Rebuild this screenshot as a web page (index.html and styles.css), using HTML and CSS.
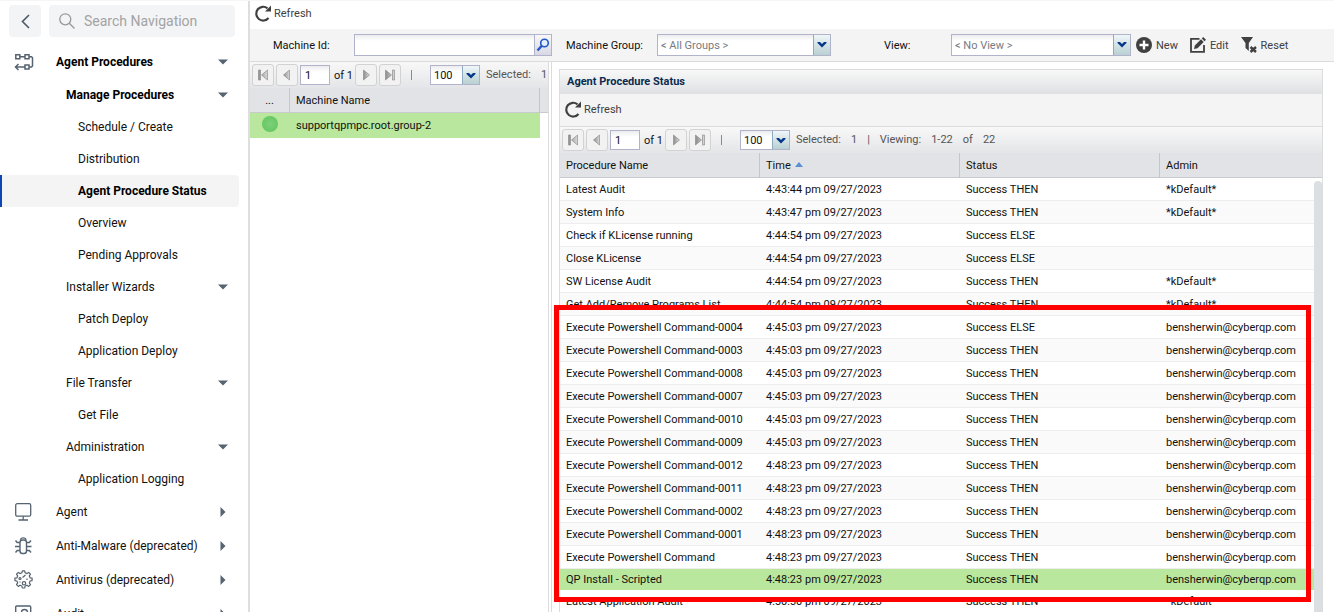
FILE: index.html
```html
<!DOCTYPE html>
<html lang="en">
<head>
  <meta charset="UTF-8">
  <meta name="viewport" content="width=device-width, initial-scale=1.0">
  <title>Agent Procedure Status</title>
  <link rel="stylesheet" href="styles.css">
</head>
<body>
  <!-- Shared icons -->
  <svg class="defs" aria-hidden="true">
    <defs>
      <linearGradient id="grey" x1="0" x2="1"><stop offset="0" stop-color="#8c8c8c"/><stop offset="1" stop-color="#dadada"/></linearGradient>
    </defs>
    <symbol id="i-refresh" viewBox="0 0 18 18"><path d="M14.500 14A6.900 6.900 0 1 1 13.500 4.300" fill="none" stroke="#404040" stroke-width="2.200"/><path d="M17 1.500v6h-6z" fill="#404040"/></symbol>
    <symbol id="i-first" viewBox="0 0 12 12"><path d="M1.500 1h2v10h-2zM10.500 1v10L4.500 6z" fill="url(#grey)" stroke="#8e8e8e" stroke-width=".7"/></symbol>
    <symbol id="i-prev" viewBox="0 0 12 12"><path d="M8.500 1v10L2.500 6z" fill="url(#grey)" stroke="#8e8e8e" stroke-width=".7"/></symbol>
    <symbol id="i-next" viewBox="0 0 12 12"><path d="M3.500 1v10l6-5z" fill="url(#grey)" stroke="#8e8e8e" stroke-width=".7"/></symbol>
    <symbol id="i-last" viewBox="0 0 12 12"><path d="M1.500 1v10l6-5zM8.500 1h2v10h-2z" fill="url(#grey)" stroke="#8e8e8e" stroke-width=".7"/></symbol>
    <symbol id="i-chevron" viewBox="0 0 10 6"><path d="M.5 0h2.500l2 2 2-2h2.500v1L5 5.500.5 1z" fill="#06388a"/></symbol>
    <symbol id="i-down" viewBox="0 0 10 6"><path d="M0 .5h10L5 5.500z" fill="#566370"/></symbol>
    <symbol id="i-right" viewBox="0 0 6 10"><path d="M.5 0v10l5-5z" fill="#566370"/></symbol>
  </svg>

  <div class="app">
    <nav class="sidebar">
      <div class="sidebar-top">
        <button class="back" aria-label="Back"><svg width="9" height="15" viewBox="0 0 9 15"><path d="M8 1 1.500 7.500 8 14" fill="none" stroke="#4b5a69" stroke-width="1.600"/></svg></button>
        <label class="search">
          <svg width="16" height="16" viewBox="0 0 16 16"><g fill="none" stroke="#999" stroke-width="1.300"><circle cx="6.300" cy="6.300" r="5.500"/><path d="m10.300 10.300 5.200 5.200"/></g></svg>
          <input type="text" placeholder="Search Navigation" aria-label="Search Navigation">
        </label>
      </div>
      <a class="item top bold" href="#">
        <svg class="icon" width="20" height="20" viewBox="0 0 20 20"><g fill="none" stroke="#566370" stroke-width="1.500"><path d="M1.800 2.800h4v4h-4zM11 2.800h4v4h-4zM11 13h4v4h-4zM6 4.800h5M15 4.800h2.500l1 1V14l-1 1H15M11 15H2M4.500 12 1.500 15l3 3"/></g></svg>
        Agent Procedures<svg class="arrow" width="10" height="6"><use href="#i-down"/></svg></a>
      <a class="item mid bold" href="#">Manage Procedures<svg class="arrow" width="10" height="6"><use href="#i-down"/></svg></a>
      <a class="item leaf" href="#">Schedule / Create</a>
      <a class="item leaf" href="#">Distribution</a>
      <a class="item leaf bold active" href="#">Agent Procedure Status</a>
      <a class="item leaf" href="#">Overview</a>
      <a class="item leaf" href="#">Pending Approvals</a>
      <a class="item mid" href="#">Installer Wizards<svg class="arrow" width="10" height="6"><use href="#i-down"/></svg></a>
      <a class="item leaf" href="#">Patch Deploy</a>
      <a class="item leaf" href="#">Application Deploy</a>
      <a class="item mid" href="#">File Transfer<svg class="arrow" width="10" height="6"><use href="#i-down"/></svg></a>
      <a class="item leaf" href="#">Get File</a>
      <a class="item mid" href="#">Administration<svg class="arrow" width="10" height="6"><use href="#i-down"/></svg></a>
      <a class="item leaf" href="#">Application Logging</a>
      <a class="item top" href="#">
        <svg class="icon" width="20" height="20" viewBox="0 0 20 20"><g fill="none" stroke="#566370" stroke-width="1.300"><rect x="1.700" y="1.700" width="15" height="12.500" rx="1.500"/><path d="M9.200 14.200v3.500M4.500 18h9.500"/></g></svg>
        Agent<svg class="arrow" width="6" height="10"><use href="#i-right"/></svg></a>
      <a class="item top" href="#">
        <svg class="icon" width="20" height="20" viewBox="0 0 20 20"><g fill="none" stroke="#566370" stroke-width="1.400"><rect x="6" y="4" width="6.500" height="13.500" rx="2.500"/><path d="M6.500 3.800c.5-2.600 5-2.600 5.500 0M1.500 4.500 3.200 6.500h2.800M1 10.500h5M1.500 16.500l1.700-2h2.800M17 4.500l-1.700 2h-2.800M17.500 10.500h-5M17 16.500l-1.700-2h-2.800"/></g></svg>
        Anti-Malware (deprecated)<svg class="arrow" width="6" height="10"><use href="#i-right"/></svg></a>
      <a class="item top" href="#">
        <svg class="icon" width="20" height="20" viewBox="0 0 20 20"><g fill="none" stroke="#566370" stroke-width="1.200" stroke-linejoin="round"><path d="M8.300.8h2.400l.4 2 1.900.8 1.700-1.200 1.800 1.800-1.200 1.700.8 1.900 2 .4v2.400l-2 .4-.8 1.900 1.200 1.700-1.800 1.800-1.700-1.200-1.900.8-.4 2H8.300l-.4-2-1.900-.8-1.700 1.200-1.800-1.800 1.200-1.700-.8-1.900-2-.4V8.200l2-.4.8-1.900-1.200-1.700 1.800-1.800L6 3.600l1.900-.8z"/><circle cx="10" cy="13.300" r="1.700"/><circle cx="6" cy="8.500" r="1"/><path d="m8.500 7.500 3-2.500M13 8.500v1.500M6 11.500v1"/></g></svg>
        Antivirus (deprecated)<svg class="arrow" width="6" height="10"><use href="#i-right"/></svg></a>
      <a class="item top" href="#">
        <svg class="icon" width="20" height="20" viewBox="0 0 20 20"><g fill="none" stroke="#566370" stroke-width="1.400"><rect x="1.700" y="2" width="15" height="15" rx="1"/><circle cx="10.500" cy="8.500" r="3"/></g></svg>
        Audit<svg class="arrow" width="6" height="10"><use href="#i-right"/></svg></a>
    </nav>

    <main class="main">
      <div class="bar">
        <button class="tool"><svg width="18" height="18"><use href="#i-refresh"/></svg>Refresh</button>
      </div>

      <form class="filters">
        <label class="f-id" for="machineId">Machine Id:</label>
        <div class="lookup">
          <input type="text" id="machineId">
          <button type="button" aria-label="Find machine"><svg width="14" height="14" viewBox="0 0 14 14"><circle cx="8.500" cy="5" r="3.800" fill="#e4f0ff" stroke="#2257c4" stroke-width="1.600"/><path d="M5.800 7.800 1.500 12.500" stroke="#2257c4" stroke-width="2.400"/></svg></button>
        </div>
        <label class="f-group" for="group">Machine Group:</label>
        <div class="combo wide"><select id="group"><option>&lt; All Groups &gt;</option></select><svg width="10" height="6"><use href="#i-chevron"/></svg></div>
        <label class="f-view" for="view">View:</label>
        <div class="combo wider"><select id="view"><option>&lt; No View &gt;</option></select><svg width="10" height="6"><use href="#i-chevron"/></svg></div>
        <button type="button" class="tool f-new"><svg width="16" height="16" viewBox="0 0 16 16"><circle cx="8" cy="8" r="8" fill="#404040"/><path d="M8 3.500v9M3.500 8h9" stroke="#fff" stroke-width="2.400"/></svg>New</button>
        <button type="button" class="tool f-edit"><svg width="16" height="16" viewBox="0 0 16 16"><path d="M9.500 1.800H1v13h13V8" fill="none" stroke="#404040" stroke-width="1.800"/><path d="m4 12 .8-3.500L11 2.300l2.700 2.700-6.200 6.200zM11.800 1.500 13.200 0 16 2.800l-1.500 1.400z" fill="#404040"/></svg>Edit</button>
        <button type="button" class="tool f-reset"><svg width="16" height="16" viewBox="0 0 16 16"><path d="M0 0h12L7.800 6v8L4.500 11V6z" fill="#404040"/><path d="m9.500 10 5.500 5M15 10l-5.500 5" stroke="#404040" stroke-width="2.400"/></svg>Reset</button>
      </form>

      <div class="panes">
        <section class="machines">
          <div class="pager">
            <button aria-label="First page"><svg width="12" height="12"><use href="#i-first"/></svg></button>
            <button aria-label="Previous page"><svg width="12" height="12"><use href="#i-prev"/></svg></button>
            <input type="text" value="1" aria-label="Page">
            <span class="of">of 1</span>
            <button aria-label="Next page"><svg width="12" height="12"><use href="#i-next"/></svg></button>
            <button aria-label="Last page"><svg width="12" height="12"><use href="#i-last"/></svg></button>
            <span class="sep"></span>
            <div class="combo size"><select aria-label="Page size"><option>100</option></select><svg width="10" height="6"><use href="#i-chevron"/></svg></div>
            <span class="count"><span>Selected:</span><span>1</span></span>
          </div>
          <table class="grid">
            <thead><tr><th class="c-state">...</th><th>Machine Name</th><th class="c-end"></th></tr></thead>
            <tbody><tr class="selected"><td class="c-state"><span class="online"></span></td><td>supportqpmpc.root.group-2</td><td class="blank"></td></tr></tbody>
          </table>
        </section>

        <section class="status">
          <div class="panel">
            <h1>Agent Procedure Status</h1>
            <div class="bar inner">
              <button class="tool"><svg width="18" height="18"><use href="#i-refresh"/></svg>Refresh</button>
            </div>
            <div class="pager">
              <button aria-label="First page"><svg width="12" height="12"><use href="#i-first"/></svg></button>
              <button aria-label="Previous page"><svg width="12" height="12"><use href="#i-prev"/></svg></button>
              <input type="text" value="1" aria-label="Page">
              <span class="of">of 1</span>
              <button aria-label="Next page"><svg width="12" height="12"><use href="#i-next"/></svg></button>
              <button aria-label="Last page"><svg width="12" height="12"><use href="#i-last"/></svg></button>
              <span class="sep"></span>
              <div class="combo size"><select aria-label="Page size"><option>100</option></select><svg width="10" height="6"><use href="#i-chevron"/></svg></div>
              <span class="count"><span>Selected:</span><span>1</span><span>|</span><span>Viewing:</span><span>1-22</span><span>of</span><span>22</span></span>
            </div>
            <div class="log">
              <table class="grid">
                <thead><tr><th class="c-200">Procedure Name</th><th class="c-200">Time <svg width="8" height="5" viewBox="0 0 8 5"><path d="M0 5h8L4 0z" fill="#5a8fd8"/></svg></th><th class="c-200">Status</th><th>Admin</th></tr></thead>
                <tbody>
                  <tr><td>Latest Audit</td><td>4:43:44 pm 09/27/2023</td><td>Success THEN</td><td>*kDefault*</td></tr>
                  <tr><td>System Info</td><td>4:43:47 pm 09/27/2023</td><td>Success THEN</td><td>*kDefault*</td></tr>
                  <tr><td>Check if KLicense running</td><td>4:44:54 pm 09/27/2023</td><td>Success ELSE</td><td></td></tr>
                  <tr><td>Close KLicense</td><td>4:44:54 pm 09/27/2023</td><td>Success ELSE</td><td></td></tr>
                  <tr><td>SW License Audit</td><td>4:44:54 pm 09/27/2023</td><td>Success THEN</td><td>*kDefault*</td></tr>
                  <tr><td>Get Add/Remove Programs List</td><td>4:44:54 pm 09/27/2023</td><td>Success THEN</td><td>*kDefault*</td></tr>
                  <tr><td>Execute Powershell Command-0004</td><td>4:45:03 pm 09/27/2023</td><td>Success ELSE</td><td>bensherwin@cyberqp.com</td></tr>
                  <tr><td>Execute Powershell Command-0003</td><td>4:45:03 pm 09/27/2023</td><td>Success THEN</td><td>bensherwin@cyberqp.com</td></tr>
                  <tr><td>Execute Powershell Command-0008</td><td>4:45:03 pm 09/27/2023</td><td>Success THEN</td><td>bensherwin@cyberqp.com</td></tr>
                  <tr><td>Execute Powershell Command-0007</td><td>4:45:03 pm 09/27/2023</td><td>Success THEN</td><td>bensherwin@cyberqp.com</td></tr>
                  <tr><td>Execute Powershell Command-0010</td><td>4:45:03 pm 09/27/2023</td><td>Success THEN</td><td>bensherwin@cyberqp.com</td></tr>
                  <tr><td>Execute Powershell Command-0009</td><td>4:45:03 pm 09/27/2023</td><td>Success THEN</td><td>bensherwin@cyberqp.com</td></tr>
                  <tr><td>Execute Powershell Command-0012</td><td>4:48:23 pm 09/27/2023</td><td>Success THEN</td><td>bensherwin@cyberqp.com</td></tr>
                  <tr><td>Execute Powershell Command-0011</td><td>4:48:23 pm 09/27/2023</td><td>Success THEN</td><td>bensherwin@cyberqp.com</td></tr>
                  <tr><td>Execute Powershell Command-0002</td><td>4:48:23 pm 09/27/2023</td><td>Success THEN</td><td>bensherwin@cyberqp.com</td></tr>
                  <tr><td>Execute Powershell Command-0001</td><td>4:48:23 pm 09/27/2023</td><td>Success THEN</td><td>bensherwin@cyberqp.com</td></tr>
                  <tr><td>Execute Powershell Command</td><td>4:48:23 pm 09/27/2023</td><td>Success THEN</td><td>bensherwin@cyberqp.com</td></tr>
                  <tr class="selected"><td>QP Install - Scripted</td><td>4:48:23 pm 09/27/2023</td><td>Success THEN</td><td>bensherwin@cyberqp.com</td></tr>
                  <tr><td>Latest Application Audit</td><td>4:50:50 pm 09/27/2023</td><td>Success THEN</td><td>*kDefault*</td></tr>
                </tbody>
              </table>
              <div class="scrollbar"></div>
              <div class="marker"></div>
            </div>
          </div>
        </section>
      </div>
    </main>
  </div>
</body>
</html>
```
FILE: styles.css
```css
* {
  box-sizing: border-box;
}

body {
  margin: 0;
  font-family: Roboto, Arial, sans-serif;
  font-size: 11px;
  color: #111;
  background-color: #fff;
  overflow: hidden;
}

button,
input,
select {
  font: inherit;
  color: inherit;
  margin: 0;
}

button {
  cursor: pointer;
}

svg {
  flex-shrink: 0;
}

.defs {
  position: absolute;
  width: 0;
  height: 0;
}

.app {
  display: flex;
  height: 100vh;
  border-top: 1px solid #f6f6f6;
}

/* Sidebar */
.sidebar {
  width: 250px;
  flex-shrink: 0;
  overflow: hidden;
  border-right: 2px solid #dedede;
  font-size: 12px;
}

.sidebar-top {
  display: flex;
  gap: 8px;
  padding: 4px 13px 8px 9px;
}

.back {
  display: flex;
  flex-shrink: 0;
  align-items: center;
  justify-content: center;
  width: 32px;
  height: 32px;
  padding: 0;
  border: none;
  border-radius: 4px;
  background-color: #f3f4f6;
}

.search {
  display: flex;
  flex: 1;
  align-items: center;
  gap: 9px;
  min-width: 0;
  height: 32px;
  padding-left: 10px;
  border-radius: 4px;
  background-color: #f3f4f6;
}

.search input {
  flex: 1;
  min-width: 0;
  padding: 0;
  border: none;
  background: none;
  font-size: 14px;
}

.search input::placeholder {
  color: #a3a3a3;
}

.item {
  display: flex;
  align-items: center;
  height: 32px;
  margin-right: 9px;
  color: #111;
  text-decoration: none;
}

.item .arrow {
  width: 10px;
  margin-left: auto;
  margin-right: 11px;
}

.top {
  height: 34px;
  padding-left: 14px;
}

.top .icon {
  margin-right: 22px;
}

.mid {
  padding-left: 66px;
}

.leaf {
  padding-left: 78px;
}

.bold {
  font-weight: bold;
  color: #000;
}

.active {
  padding-left: 76px;
  border-left: 2px solid #0b47b5;
  border-radius: 0 4px 4px 0;
  background-color: #f4f4f4;
}

/* Main area */
.main {
  display: flex;
  flex: 1;
  flex-direction: column;
  min-width: 0;
}

.bar {
  display: flex;
  align-items: center;
  height: 28px;
  padding: 0 4px 4px;
}

.tool {
  display: flex;
  align-items: center;
  gap: 2px;
  padding: 0;
  border: none;
  background: none;
  color: #404040;
}

.filters {
  display: flex;
  align-items: center;
  height: 33px;
  border-bottom: 1px solid #dcdcdf;
  background-color: #f4f4f5;
}

.f-id {
  width: 104px;
  padding-left: 23px;
}

.f-group {
  width: 105px;
  padding-left: 14px;
}

.f-view {
  width: 120px;
  padding-left: 53px;
}

.f-new,
.f-edit,
.f-reset {
  gap: 4px;
}

.f-new {
  margin-left: 5px;
}

.f-edit,
.f-reset {
  margin-left: 12px;
}

.lookup {
  display: flex;
  width: 198px;
  height: 22px;
  border: 1px solid #b1b3ca;
}

.lookup input {
  flex: 1;
  min-width: 0;
  padding: 0 4px;
  border: none;
  background: linear-gradient(#ececef, #fff 6px);
}

.lookup button {
  display: flex;
  align-items: center;
  justify-content: center;
  width: 17px;
  padding: 0;
  border: none;
  border-left: 1px solid #b1b3ca;
  background: linear-gradient(#f8f8fa, #d8d8e4);
}

.combo {
  position: relative;
  height: 22px;
}

.combo select {
  width: 100%;
  height: 100%;
  padding: 0 20px 0 3px;
  appearance: none;
  border: 1px solid #b1b3ca;
  border-radius: 0;
  background: linear-gradient(#8fabc4, #8fabc4) right 16px top / 1px 100% no-repeat,
    linear-gradient(#eff6f8, #b9d0d2) right / 16px 100% no-repeat,
    linear-gradient(#ececef, #fff 6px);
  color: #767b83;
}

/* Arrow drawn over the trigger part of the select */
.combo svg {
  position: absolute;
  top: 8px;
  right: 4px;
  pointer-events: none;
}

.wide {
  width: 174px;
}

.wider {
  width: 180px;
}

.size {
  flex-shrink: 0;
  width: 50px;
  height: 20px;
}

.size select {
  color: #111;
}

.panes {
  display: flex;
  flex: 1;
  min-height: 0;
}

.machines {
  width: 299px;
  flex-shrink: 0;
  overflow: hidden;
  border-right: 1px solid #dcdcdf;
}

.status {
  flex: 1;
  min-width: 0;
  margin-left: 2px;
  padding: 7px 11px 0 7px;
  border-left: 1px solid #dcdcdf;
}

.panel {
  border: 1px solid #dcdcdf;
}

.panel h1 {
  margin: 0;
  padding-left: 7px;
  font-size: 11px;
  line-height: 24px;
  color: #0b2b4f;
  background: linear-gradient(#f8f8f8, #dfe0e3);
}

.inner {
  height: 32px;
  padding: 0 4px 2px;
  background-color: #f4f4f4;
}

/* Paging toolbar */
.pager {
  display: flex;
  align-items: center;
  height: 26px;
  padding: 0 2px;
  background: linear-gradient(#f8f8f8, #e4e5e8);
  white-space: nowrap;
}

.panel .pager {
  height: 27px;
  border-top: 1px solid #dcdcdf;
}

.pager button {
  display: flex;
  align-items: center;
  justify-content: center;
  width: 22px;
  height: 22px;
  flex-shrink: 0;
  margin-right: 2px;
  padding: 0;
  border: 1px solid #d2d2d2;
  border-radius: 3px;
  background-color: #f2f2f2;
}

.pager input {
  flex-shrink: 0;
  width: 30px;
  height: 20px;
  padding: 0 4px;
  border: 1px solid #b1b3ca;
  background: linear-gradient(#ececef, #fff 6px);
}

.of {
  flex-shrink: 0;
  width: 25px;
  padding-left: 4px;
}

.sep {
  flex-shrink: 0;
  width: 1px;
  height: 10px;
  margin: 0 18px 0 8px;
  background-color: #8a8a8a;
}

.count {
  display: flex;
  gap: 10px;
  padding-left: 6px;
  padding-bottom: 1px;
  color: #555;
}

/* Tables */
.grid {
  width: 100%;
  table-layout: fixed;
  border-collapse: separate;
  border-spacing: 0;
}

.grid th {
  height: 25px;
  padding: 0 6px;
  border-right: 1px solid #c5c6ca;
  border-bottom: 1px solid #c9cacd;
  background-color: #e2e3e6;
  font-weight: normal;
  text-align: left;
}

.grid th:last-child {
  border-right: none;
}

.grid th svg {
  margin-left: 2px;
  vertical-align: 2px;
}

.grid td {
  height: 23px;
  padding: 0 6px;
  border-bottom: 1px solid #ededed;
  white-space: nowrap;
}

.grid tr:nth-child(even) td {
  background-color: #fafafa;
}

.grid tr.selected td {
  height: 21px;
  border-bottom: none;
  background-color: #b9e79d;
}

.machines tr.selected td {
  height: 25px;
}

.grid tr.selected .blank {
  background-color: #fff;
}

.grid .c-state {
  width: 40px;
  padding: 0;
  text-align: center;
}

.grid .c-end {
  width: 8px;
  padding: 0;
}

.c-200 {
  width: 200px;
}

.online {
  display: inline-block;
  width: 16px;
  height: 16px;
  border-radius: 50%;
  background: radial-gradient(#7ed07a, #5cc65a);
}

.log {
  position: relative;
}

.scrollbar {
  position: absolute;
  top: 28px;
  right: 0;
  bottom: 0;
  width: 8px;
  border-radius: 4px 4px 0 0;
  background-color: #dcdfe2;
}

/* Highlight around the scripted install run */
.marker {
  position: absolute;
  top: 152px;
  left: -6px;
  right: 11px;
  height: 297px;
  border: 5px solid #f00;
}
```
